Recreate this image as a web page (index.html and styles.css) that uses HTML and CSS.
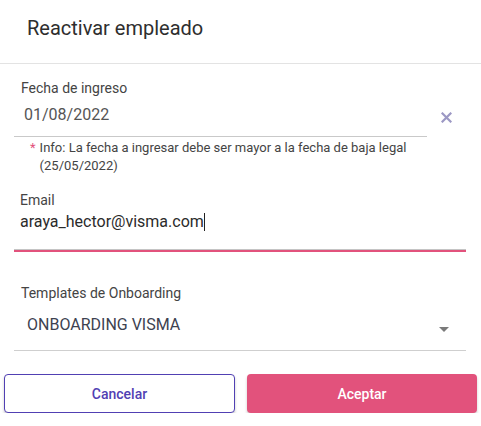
FILE: index.html
```html
<!DOCTYPE html>
<html lang="es">
<head>
    <meta charset="UTF-8">
    <meta name="viewport" content="width=device-width, initial-scale=1.0">
    <title>Reactivar empleado</title>
    <link rel="stylesheet" href="styles.css">
</head>
<body>
    <div class="dialog">
        <div class="dialog-header">
            <h2>Reactivar empleado</h2>
        </div>

        <div class="date-row">
            <div class="field field-date">
                <label>Fecha de ingreso</label>
                <div class="value date-value">01/08/2022</div>
            </div>
            <span class="clear-icon">
                <svg width="11" height="11" viewBox="0 0 11 11">
                    <path d="M1.5 1.5 L9.5 9.5 M9.5 1.5 L1.5 9.5" stroke="#9c98c4" stroke-width="2.2" stroke-linecap="square"/>
                </svg>
            </span>
        </div>
        <div class="info">
            <span class="star">*</span>
            <span>Info: La fecha a ingresar debe ser mayor a la fecha de baja legal (25/05/2022)</span>
        </div>

        <div class="field field-email">
            <label>Email</label>
            <div class="value email-value">araya_hector@visma.com<span class="caret"></span></div>
        </div>

        <div class="field field-select">
            <label>Templates de Onboarding</label>
            <div class="value select-value">
                <span>ONBOARDING VISMA</span>
                <span class="arrow"></span>
            </div>
        </div>

        <div class="actions">
            <button class="btn btn-cancel">Cancelar</button>
            <button class="btn btn-ok">Aceptar</button>
        </div>
    </div>
</body>
</html>
```

FILE: styles.css
```css
body {
    margin: 0;
    background: #fff;
    font-family: Roboto, "Liberation Sans", sans-serif;
    color: #333;
}
.dialog {
    width: 481px;
}
.dialog-header {
    height: 64px;
    box-sizing: border-box;
    padding: 16px 0 0 27px;
    border-bottom: 1px solid #e3e3e3;
}
.dialog-header h2 {
    margin: 0;
    font-size: 20px;
    line-height: 24px;
    font-weight: 400;
    color: #2e2e2e;
}
.field label {
    display: block;
    font-size: 14px;
    line-height: 16px;
    color: #444;
}
.value {
    font-size: 16px;
    line-height: 20px;
}
.date-row {
    display: flex;
    align-items: flex-end;
    margin-top: 16px;
}
.field-date {
    width: 413px;
    margin-left: 14px;
    border-bottom: 1px solid #c9c9c9;
}
.field-date label {
    padding-left: 7px;
}
.date-value {
    margin-top: 9px;
    padding: 0 0 11px 10px;
    color: #555;
}
.clear-icon {
    display: flex;
    margin: 0 0 14px 14px;
}
.info {
    display: flex;
    gap: 4px;
    width: 400px;
    margin: 2px 0 0 30px;
    font-size: 13px;
    line-height: 18px;
    color: #444;
}
.star {
    color: #e2527c;
}
.field-email {
    position: relative;
    width: 452px;
    margin: 17px 0 0 14px;
    border-bottom: 1px solid #c4c4c4;
}
.field-email::after {
    content: "";
    position: absolute;
    left: 0;
    right: 0;
    bottom: -3px;
    height: 2px;
    background: #e2527c;
}
.field-email label {
    padding-left: 6px;
}
.email-value {
    margin-top: 4px;
    padding: 0 0 17px 6px;
    color: #2b2b2b;
}
.caret {
    display: inline-block;
    width: 1px;
    height: 18px;
    background: #222;
    vertical-align: -4px;
}
.field-select {
    width: 452px;
    margin: 35px 0 0 14px;
    border-bottom: 1px solid #cfcfcf;
}
.field-select label {
    padding-left: 7px;
}
.select-value {
    display: flex;
    justify-content: space-between;
    align-items: center;
    margin-top: 14px;
    padding: 0 17px 15px 13px;
    color: #3d4250;
}
.arrow {
    width: 0;
    height: 0;
    margin-top: 9px;
    border-left: 5px solid transparent;
    border-right: 5px solid transparent;
    border-top: 5px solid #7a7a7a;
}
.actions {
    display: flex;
    gap: 12px;
    margin: 23px 0 0 4px;
}
.btn {
    height: 39px;
    border-radius: 4px;
    font-family: Roboto, "Liberation Sans", sans-serif;
    font-size: 14px;
    font-weight: 500;
    box-shadow: 0 2px 3px rgba(0, 0, 0, 0.2);
}
.btn-cancel {
    width: 231px;
    background: #fff;
    border: 1px solid #5140b3;
    color: #5140b3;
}
.btn-ok {
    width: 230px;
    background: #e2527c;
    border: none;
    color: #fff;
}
```
